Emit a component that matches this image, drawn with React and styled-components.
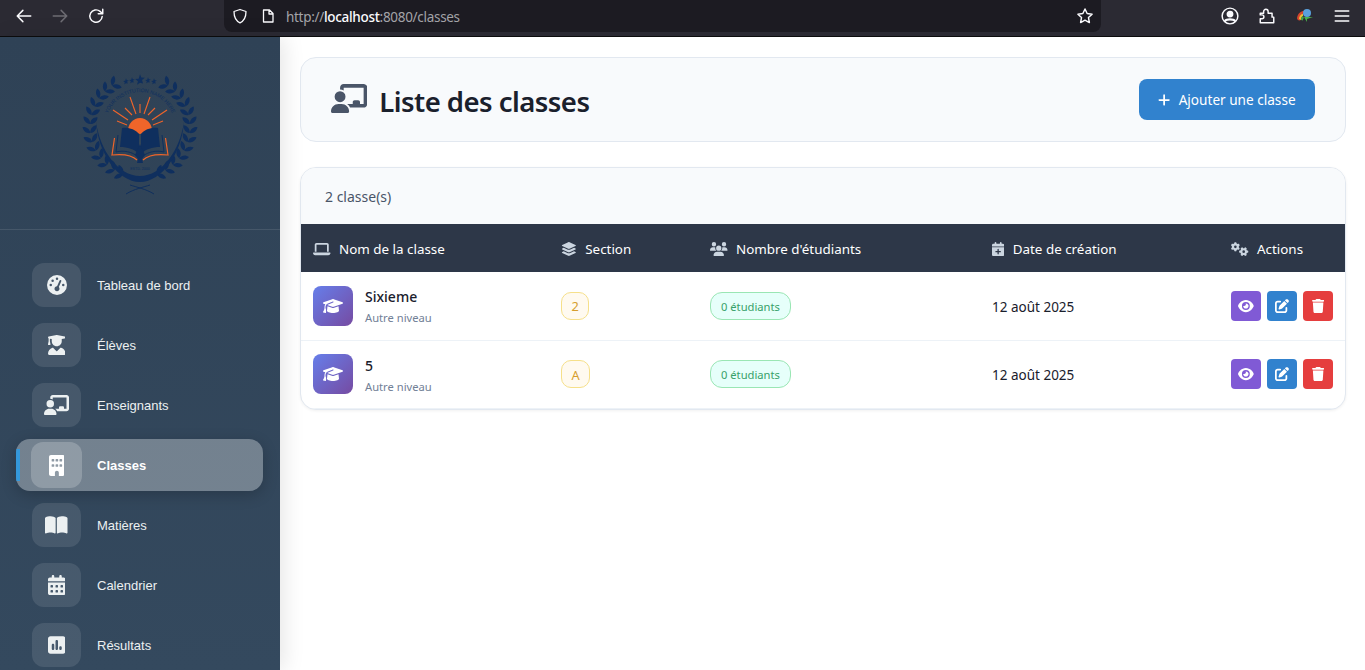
import React from 'react';
import styled, { createGlobalStyle } from 'styled-components';
import {
  FaBookOpen, FaBuilding, FaCalendarDays, FaCalendarPlus, FaChalkboardUser, FaEye, FaGaugeHigh, FaGears,
  FaGraduationCap, FaLaptop, FaLayerGroup, FaPenToSquare, FaPlus, FaSquarePollVertical, FaTrash, FaUserGraduate, FaUsers,
} from 'react-icons/fa6';

const GlobalStyle = createGlobalStyle`
  html, body { margin: 0; padding: 0; background: #fff; }
  body { font-family: "Noto Sans", "Open Sans", sans-serif; overflow: hidden; }
  * { box-sizing: border-box; }
  /* keep the font-awesome glyphs at their own proportions, 1em high */
  svg[viewBox^="0 0 640"] { width: 1.25em; }
  svg[viewBox^="0 0 576"] { width: 1.125em; }
  svg[viewBox^="0 0 448"] { width: 0.875em; }
  svg[viewBox^="0 0 384"] { width: 0.75em; }
`;

const navItems = [
  { label: 'Tableau de bord', icon: FaGaugeHigh },
  { label: 'Élèves', icon: FaUserGraduate },
  { label: 'Enseignants', icon: FaChalkboardUser },
  { label: 'Classes', icon: FaBuilding, active: true },
  { label: 'Matières', icon: FaBookOpen },
  { label: 'Calendrier', icon: FaCalendarDays },
  { label: 'Résultats', icon: FaSquarePollVertical },
];

const classes = [
  { name: 'Sixieme', section: '2' },
  { name: '5', section: 'A' },
];

const columns = [
  { label: 'Nom de la classe', icon: FaLaptop },
  { label: 'Section', icon: FaLayerGroup },
  { label: "Nombre d'étudiants", icon: FaUsers },
  { label: 'Date de création', icon: FaCalendarPlus },
  { label: 'Actions', icon: FaGears },
];

function BrowserIcon({ children, color = '#fbfbfe', size = 18 }) {
  return (
    <svg width={size} height={size} viewBox="0 0 16 16" fill="none" stroke={color} strokeWidth="1.3" strokeLinecap="round" strokeLinejoin="round">
      {children}
    </svg>
  );
}

function Logo() {
  const navy = '#0f2f5e';
  const orange = '#f0652a';
  const leaves = [];
  for (let deg = 34; deg <= 166; deg += 10.5) {
    [1, -1].forEach((side) => {
      const r = (deg * Math.PI) / 180;
      const x = 70 - side * Math.sin(r) * 50;
      const y = 62 - Math.cos(r) * 50;
      leaves.push(
        <g key={`${deg}-${side}`} transform={`translate(${x} ${y}) rotate(${side * (90 - deg)})`}>
          <path d="M0 0 C-4 0 -7 -3 -7 -7 C-3 -7 0 -4 0 0Z" fill={navy} />
          <path d="M0 0 C4 0 7 -3 7 -7 C3 -7 0 -4 0 0Z" fill={navy} />
        </g>,
      );
    });
  }
  const stars = [[56, 16, 0.7], [62, 15, 0.7], [70, 14, 1.2], [78, 15, 0.7], [84, 16, 0.7]];
  const rays = [
    [66, 49, 60, 32], [74, 49, 80, 32], [70, 48, 70, 39], [62, 50, 55, 43], [78, 50, 85, 43],
    [58, 55, 43, 45], [82, 55, 97, 45], [57, 60, 47, 56], [83, 60, 93, 56],
  ];
  return (
    <svg width="140" height="130" viewBox="0 0 140 130">
      <defs>
        <path id="logo-arc" d="M36.200 53 A35 35 0 0 1 103.800 53" />
      </defs>
      {leaves}
      <path d="M26 57 C28 88 48 117 70 117 C92 117 112 88 114 57 C110 85 92 111 70 111 C48 111 30 85 26 57Z" fill={navy} />
      <path d="M60 120 C66 122 76 124 84 129 M80 120 C74 122 64 124 56 129" stroke={navy} strokeWidth="1" fill="none" />
      {stars.map(([x, y, s]) => (
        <path key={x} transform={`translate(${x} ${y}) scale(${s})`} d="m0 -4 1.100 2.800 2.900 .2-2.300 1.800.8 2.900L0 3.100l-2.500 1.600.8-2.900-2.300-1.800 2.900-.2Z" fill={navy} />
      ))}
      <text fontSize="5.200" fill={navy} fontFamily="Liberation Sans">
        <textPath href="#logo-arc" startOffset="50%" textAnchor="middle">YOUR INSTITUTION NAME HERE</textPath>
      </text>
      {rays.map(([x1, y1, x2, y2]) => (
        <line key={`${x2}-${y2}`} x1={x1} y1={y1} x2={x2} y2={y2} stroke={orange} strokeWidth="1.100" />
      ))}
      <path d="M58 66 A12 13 0 0 1 82 66 L70 69 Z" fill={orange} />
      <path d="M52 63 C58 62 65 64 69 69 L69 89 C64 84 58 82 50 82Z" fill={navy} />
      <path d="M88 63 C82 62 75 64 71 69 L71 89 C76 84 82 82 90 82Z" fill={navy} />
      <path d="M48 70 L46 87 C54 85 62 87 67 91 M92 70 L94 87 C86 85 78 87 73 91" stroke={navy} strokeWidth="1" fill="none" />
      <path d="M44.500 73 L42 90 C52 89 62 90 67 95 M95.500 73 L98 90 C88 89 78 90 73 95" stroke={orange} strokeWidth="1.200" fill="none" />
      <path d="M70 79 L75 90 L72 94 L73 98 L67 98 L68 94 L65 90Z" fill={navy} />
      <text x="70" y="105" textAnchor="middle" fontSize="3.600" fill={navy} fontFamily="Liberation Sans">ESTD. 2000</text>
    </svg>
  );
}

export default function App() {
  return (
    <>
      <GlobalStyle />
      <Window>
        <BrowserBar>
          <NavButtons>
            <BrowserIcon><path d="M14 8H2.500M7 3 2 8l5 5" /></BrowserIcon>
            <BrowserIcon color="#6d6c73"><path d="M2 8h11.500M9 3l5 5-5 5" /></BrowserIcon>
            <BrowserIcon><path d="M13.500 8.500A5.500 5.500 0 1 1 11.600 3.900L14 6M14 2v4h-4" /></BrowserIcon>
          </NavButtons>
          <AddressBar>
            <BrowserIcon size={16}><path d="M8 1.500 14 3.500C14 9 12 13 8 14.800 4 13 2 9 2 3.500Z" /></BrowserIcon>
            <BrowserIcon size={16}><path d="M3.500 2h6L13 5.500V14H3.500ZM9 2v4h4" /></BrowserIcon>
            <Url>http://<strong>localhost</strong>:8080/classes</Url>
            <StarSlot>
              <BrowserIcon><path d="m8 1.800 1.900 4 4.400.6-3.200 3 .8 4.400L8 11.700l-3.900 2.100.8-4.400-3.200-3 4.400-.6Z" /></BrowserIcon>
            </StarSlot>
          </AddressBar>
          <BrowserTools>
            <BrowserIcon>
              <circle cx="8" cy="8" r="7" />
              <circle cx="8" cy="6.300" r="2.400" fill="#fbfbfe" />
              <path d="M3.800 12.200C5 10.500 11 10.500 12.200 12.200" strokeWidth="2" />
            </BrowserIcon>
            <BrowserIcon>
              <path d="M2 5.500h3V4a2 2 0 0 1 4 0v1.500h3.500V9H14v5H2v-3.500h1.500a1.700 1.700 0 0 0 0-3.500H2Z" />
            </BrowserIcon>
            <svg width="18" height="18" viewBox="0 0 18 18">
              <path d="M1 11C2 6 5 4 8 4L7 7C5 8 4 10 5 13 3 14 1 13 1 11Z" fill="#d6452c" />
              <path d="M3 12C3 9 5 7 7 7L7 9C5.500 9.500 5 11 5.500 13Z" fill="#e8c23a" />
              <path d="M5 13C5 11 6 9.500 7 9L8 11C7 11.500 7 12.500 7 13.500Z" fill="#3fa548" />
              <circle cx="11" cy="6" r="4" fill="#5aa0dc" />
              <path d="M8 10H17L11 12 11 15Z" fill="#48b04a" />
            </svg>
            <BrowserIcon><path d="M2 3.500h12M2 8h12M2 12.500h12" /></BrowserIcon>
          </BrowserTools>
        </BrowserBar>
        <Body>
          <Sidebar>
            <Brand><Logo /></Brand>
            <Nav>
              {navItems.map(({ label, icon: Icon, active }) => (
                <NavRow key={label}>
                  <NavLink $active={active}>
                    <NavIcon $active={active}><Icon /></NavIcon>
                    <NavLabel $active={active}>{label}</NavLabel>
                  </NavLink>
                </NavRow>
              ))}
            </Nav>
          </Sidebar>
          <Main>
            <PageHeader>
              <Title><FaChalkboardUser />Liste des classes</Title>
              <AddButton><FaPlus />Ajouter une classe</AddButton>
            </PageHeader>
            <Card>
              <CardHead>2 classe(s)</CardHead>
              <Table>
                <colgroup>
                  <col width="248" /><col width="149" /><col width="282" /><col width="239" /><col width="126" />
                </colgroup>
                <thead>
                  <tr>
                    {columns.map(({ label, icon: Icon }) => (
                      <Th key={label}><Icon />{label}</Th>
                    ))}
                  </tr>
                </thead>
                <tbody>
                  {classes.map((c) => (
                    <Row key={c.name}>
                      <Td>
                        <ClassCell>
                          <Avatar><FaGraduationCap /></Avatar>
                          <ClassText>
                            <ClassName>{c.name}</ClassName>
                            <ClassLevel>Autre niveau</ClassLevel>
                          </ClassText>
                        </ClassCell>
                      </Td>
                      <Td><SectionBadge>{c.section}</SectionBadge></Td>
                      <Td><StudentBadge>0 étudiants</StudentBadge></Td>
                      <DateCell>12 août 2025</DateCell>
                      <Td>
                        <Actions>
                          <ActionButton $bg="#805ad5"><FaEye /></ActionButton>
                          <ActionButton $bg="#3182ce"><FaPenToSquare /></ActionButton>
                          <ActionButton $bg="#e53e3e"><FaTrash /></ActionButton>
                        </Actions>
                      </Td>
                    </Row>
                  ))}
                </tbody>
              </Table>
            </Card>
          </Main>
        </Body>
      </Window>
    </>
  );
}

const Window = styled.div`
  width: 1365px;
  height: 670px;
  overflow: hidden;
  display: flex;
  flex-direction: column;
`;

const BrowserBar = styled.div`
  height: 37px;
  flex: none;
  display: flex;
  background: #2b2a33;
  border-bottom: 1px solid #0c0c0d;
`;

const NavButtons = styled.div`
  width: 224px;
  padding: 7px 0 0 15px;
  display: flex;
  gap: 18px;
  align-items: flex-start;
`;

const AddressBar = styled.div`
  width: 877px;
  height: 32px;
  padding: 0 7px 0 8px;
  display: flex;
  align-items: center;
  gap: 12px;
  background: #1c1b22;
  border-radius: 0 0 8px 8px;
`;

const Url = styled.div`
  flex: 1;
  margin-left: -2px;
  padding-top: 2px;
  font-size: 13.500px;
  letter-spacing: -0.3px;
  color: #a3a3a8;
  strong { font-weight: 500; color: #fbfbfe; }
`;

const StarSlot = styled.div`
  display: flex;
`;

const BrowserTools = styled.div`
  flex: 1;
  padding: 7px 14px 0 120px;
  display: flex;
  justify-content: space-between;
  align-items: flex-start;
`;

const Body = styled.div`
  flex: 1;
  display: flex;
  min-height: 0;
`;

const Sidebar = styled.aside`
  width: 280px;
  flex: none;
  background: linear-gradient(180deg, #2f4256 0%, #34495e 100%);
  box-shadow: 4px 0 20px rgba(0, 0, 0, 0.1);
  position: relative;
  overflow: hidden;
`;

const Brand = styled.div`
  height: 193px;
  display: flex;
  justify-content: center;
  padding-top: 28px;
  border-bottom: 1px solid rgba(255, 255, 255, 0.1);
`;

const Nav = styled.nav`
  padding: 25px 17px 0 16px;
`;

const NavRow = styled.div`
  height: 60px;
  display: flex;
  align-items: center;
`;

const NavLink = styled.a`
  width: 100%;
  height: ${(p) => (p.$active ? '52px' : '44px')};
  display: flex;
  align-items: center;
  gap: ${(p) => (p.$active ? '15px' : '16px')};
  padding-left: ${(p) => (p.$active ? '15px' : '16px')};
  border-radius: 14px;
  position: relative;
  background: ${(p) => (p.$active ? 'rgba(255, 255, 255, 0.32)' : 'transparent')};
  box-shadow: ${(p) => (p.$active ? '0 4px 15px rgba(0, 0, 0, 0.2)' : 'none')};
  overflow: hidden;
  &::before {
    content: '';
    display: ${(p) => (p.$active ? 'block' : 'none')};
    position: absolute;
    left: 0;
    top: 10px;
    height: 32px;
    width: 4px;
    background: #3498db;
  }
`;

const NavIcon = styled.span`
  width: ${(p) => (p.$active ? '51px' : '49px')};
  height: ${(p) => (p.$active ? '46px' : '44px')};
  display: flex;
  align-items: center;
  justify-content: center;
  border-radius: 12px;
  font-size: ${(p) => (p.$active ? '21px' : '20px')};
  color: ${(p) => (p.$active ? '#fff' : '#ecf0f1')};
  background: rgba(255, 255, 255, ${(p) => (p.$active ? 0.2 : 0.1)});
`;

const NavLabel = styled.span`
  font-family: "Liberation Sans", Arial, sans-serif;
  font-size: 13px;
  font-weight: ${(p) => (p.$active ? 700 : 400)};
  color: ${(p) => (p.$active ? '#fff' : '#ecf0f1')};
`;

const Main = styled.main`
  flex: 1;
  min-width: 0;
  padding: 20px 19px 0 20px;
`;

const PageHeader = styled.header`
  height: 85px;
  padding: 0 30px;
  margin-bottom: 25px;
  display: flex;
  align-items: center;
  justify-content: space-between;
  background: #f8fafc;
  border: 1px solid #e2e8f0;
  border-radius: 16px;
`;

const Title = styled.h1`
  margin: 0;
  padding-top: 3px;
  display: flex;
  align-items: center;
  gap: 12px;
  font-size: 27.500px;
  font-weight: 600;
  letter-spacing: -0.53px;
  color: #1a202c;
  svg { font-size: 29px; color: #4a5568; margin-top: -5px; }
`;

const AddButton = styled.button`
  width: 176px;
  height: 41px;
  display: flex;
  align-items: center;
  justify-content: center;
  gap: 8px;
  font-family: inherit;
  font-size: 13.600px;
  font-weight: 400;
  color: #fff;
  background: #3182ce;
  border: none;
  border-radius: 8px;
  svg { font-size: 14px; }
`;

const Card = styled.section`
  background: #fff;
  border: 1px solid #e2e8f0;
  border-radius: 16px;
  box-shadow: 0 1px 3px rgba(0, 0, 0, 0.06);
  overflow: hidden;
`;

const CardHead = styled.div`
  height: 56px;
  padding: 0 24px;
  display: flex;
  align-items: center;
  font-size: 14px;
  color: #4a5568;
  background: #f8fafc;
`;

const Table = styled.table`
  width: 100%;
  table-layout: fixed;
  border-collapse: collapse;
`;

const Th = styled.th`
  height: 48px;
  padding: 2px 12px 0;
  text-align: left;
  font-size: 13.400px;
  font-weight: 400;
  color: #fff;
  background: #2d3748;
  svg { font-size: 14px; margin-right: 8.500px; color: #cbd5e0; vertical-align: -2px; }
`;

const Row = styled.tr`
  height: 68px;
  border-bottom: 1px solid #edf2f7;
`;

const Td = styled.td`
  padding: 0 12px;
`;

const DateCell = styled(Td)`
  padding-top: 2px;
  font-size: 13.500px;
  color: #1a202c;
`;

const ClassCell = styled.div`
  display: flex;
  align-items: center;
  gap: 12px;
`;

const ClassText = styled.div`
  margin-top: 2px;
`;

const Avatar = styled.div`
  width: 40px;
  height: 40px;
  display: flex;
  align-items: center;
  justify-content: center;
  font-size: 16px;
  color: #fff;
  border-radius: 8px;
  background: linear-gradient(135deg, #667eea 0%, #764ba2 100%);
`;

const ClassName = styled.div`
  font-size: 14px;
  font-weight: 500;
  color: #1a202c;
  line-height: 20px;
`;

const ClassLevel = styled.div`
  margin-top: 3px;
  font-size: 11.200px;
  color: #718096;
  line-height: 16px;
`;

const SectionBadge = styled.span`
  display: inline-flex;
  align-items: center;
  justify-content: center;
  height: 28px;
  padding: 1px 9.500px 0;
  font-size: 12.800px;
  color: #d69e2e;
  background: #fffaf0;
  border: 1px solid #f6e08a;
  border-radius: 10px;
`;

const StudentBadge = styled.span`
  display: inline-flex;
  align-items: center;
  height: 28px;
  padding: 1px 10px 0;
  font-size: 11.200px;
  color: #38a169;
  background: #e6fffa;
  border: 1px solid #9ae6b4;
  border-radius: 12px;
`;

const Actions = styled.div`
  display: flex;
  gap: 6px;
`;

const ActionButton = styled.button`
  width: 30px;
  height: 30px;
  padding: 0;
  display: flex;
  align-items: center;
  justify-content: center;
  font-size: 14px;
  color: #fff;
  background: ${(p) => p.$bg};
  border: none;
  border-radius: 4px;
`;
